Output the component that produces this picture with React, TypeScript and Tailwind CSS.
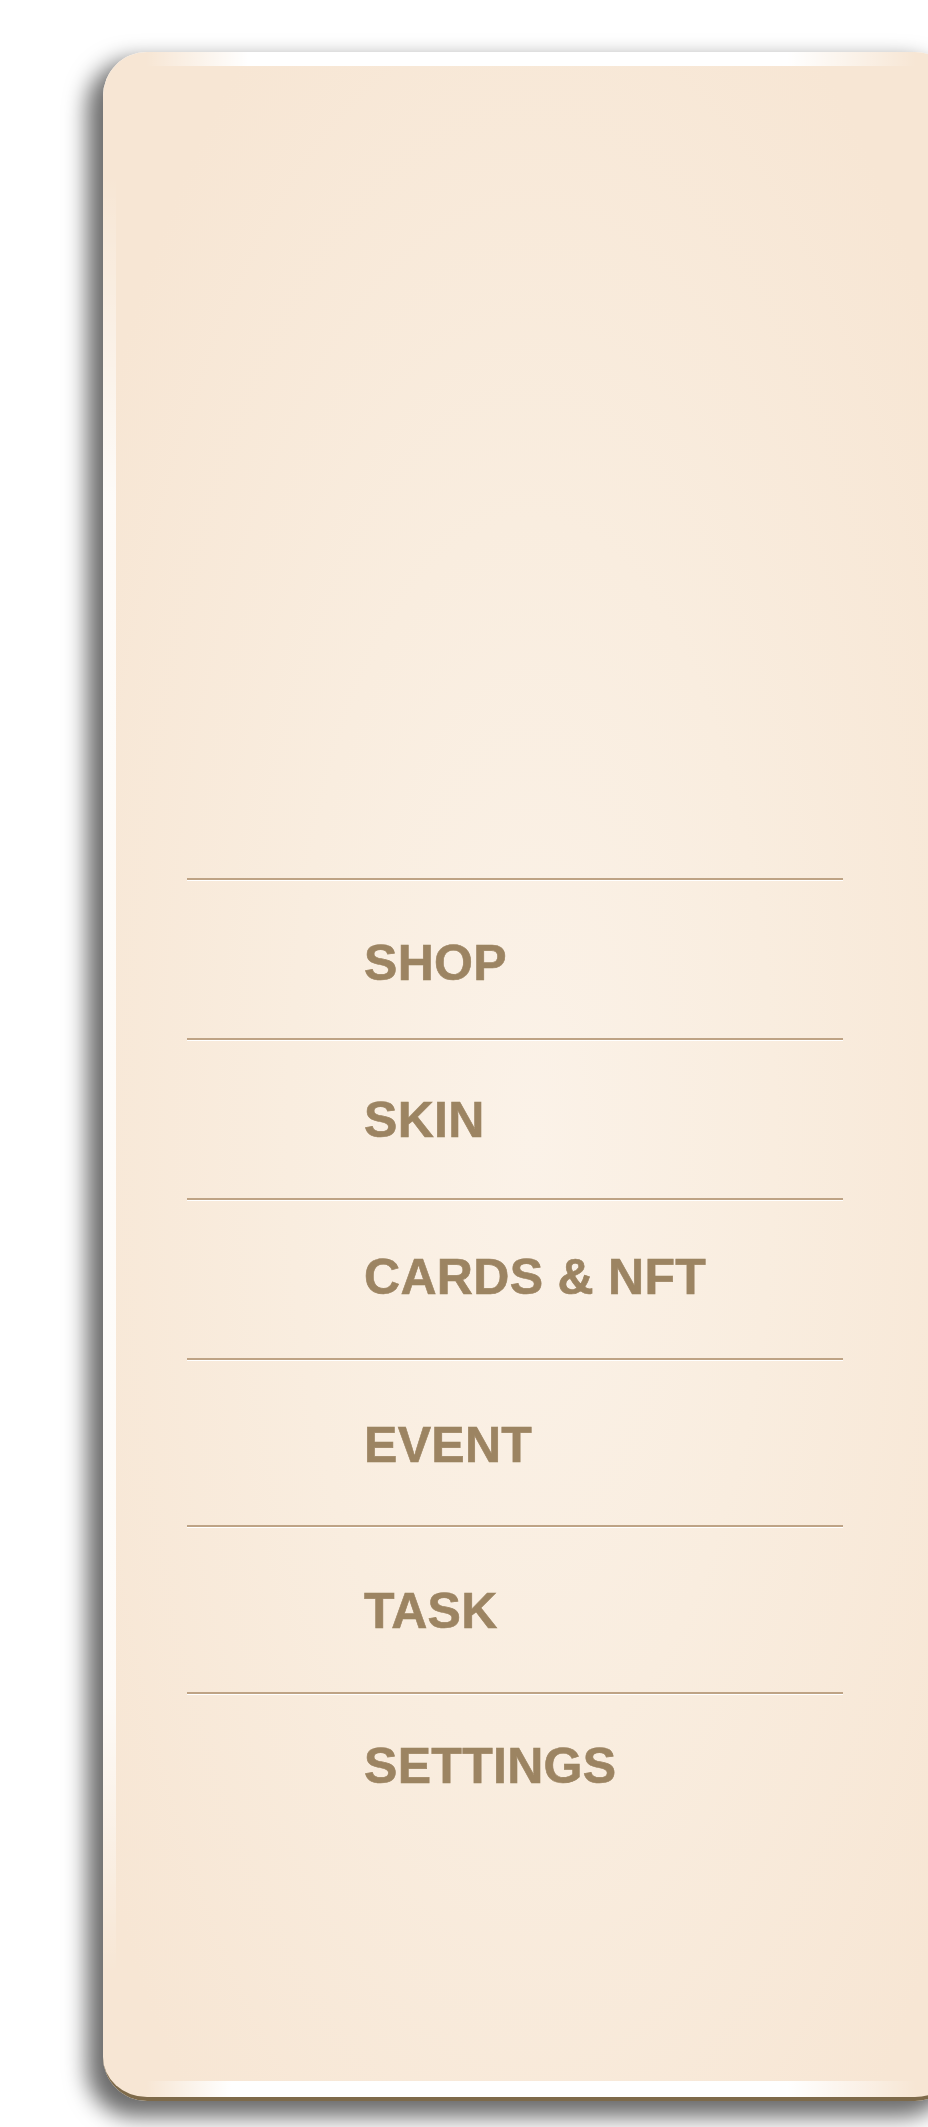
import React from "react";

const items: { label: string; h: string; mt: string }[] = [
  { label: "SHOP", h: "h-[160px]", mt: "mt-[57px]" },
  { label: "SKIN", h: "h-[160px]", mt: "mt-[54px]" },
  { label: "CARDS & NFT", h: "h-[160px]", mt: "mt-[51px]" },
  { label: "EVENT", h: "h-[167px]", mt: "mt-[59px]" },
  { label: "TASK", h: "h-[167px]", mt: "mt-[58px]" },
  { label: "SETTINGS", h: "h-[160px]", mt: "mt-[46px]" },
];

export default function App() {
  return (
    <div className="relative w-[928px] h-[2127px] overflow-hidden bg-white pt-[52px] pl-[103px]">
      <div className="relative w-[856px] h-[2049px] rounded-[44px] border-b-4 border-[#7e6a4a] overflow-hidden bg-[radial-gradient(ellipse_at_50%_53%,#fbf2e8_0%,#f9eddf_40%,#f7e6d4_85%)] shadow-[-12px_12px_22px_4px_rgba(0,0,0,0.58)]">
        <div className="absolute top-0 left-0 right-0 h-[14px] bg-[linear-gradient(to_right,rgba(255,255,255,0)_5%,#ffffff_17%,#ffffff_80%,rgba(255,255,255,0)_95%)]" />
        <div className="absolute bottom-0 left-0 right-0 h-[16px] bg-[linear-gradient(to_right,rgba(255,255,255,0)_5%,#ffffff_15%,#ffffff_80%,rgba(255,255,255,0)_95%)]" />
        <div className="absolute top-0 bottom-0 left-0 w-[13px] bg-[linear-gradient(to_bottom,rgba(255,255,255,0)_6%,rgba(255,255,255,0.85)_22%,rgba(255,255,255,0.85)_80%,rgba(255,255,255,0)_94%)]" />
        <nav className="relative flex flex-col pt-[826px] ml-[84px] w-[656px]">
          {items.map((it, i) => (
            <div key={i} className={`flex flex-col ${it.h}`}>
              <div className="h-[2px] bg-[#bea385]" />
              <div className="h-px bg-white" />
              <div
                className={`${it.mt} pl-[177px] text-[50px] leading-[50px] font-bold tracking-[0.3px] text-[#9c8462] whitespace-nowrap [-webkit-text-stroke:0.6px_#9c8462]`}
                style={{ fontFamily: '"Liberation Sans", Arial, sans-serif' }}
              >
                {it.label}
              </div>
            </div>
          ))}
        </nav>
      </div>
    </div>
  );
}
